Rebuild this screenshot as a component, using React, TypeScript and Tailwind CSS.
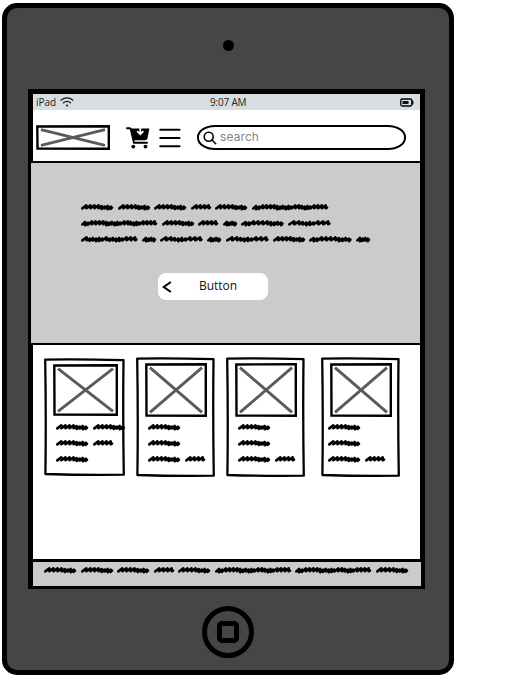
import React from "react";

type Kind = "a" | "b" | "c" | "d" | "e" | "f" | "g";

// o = open stroke, d = dense stroke
const KINDS: Record<Kind, { w: number; pattern: string }> = {
  a: { w: 32, pattern: "oooodddd" },
  b: { w: 20, pattern: "oooo" },
  c: { w: 76, pattern: "ddooooddddddooddddoooo" },
  d: { w: 14, pattern: "dddd" },
  e: { w: 42.4, pattern: "ddoooodddd" },
  f: { w: 42.4, pattern: "ooddddooo" },
  g: { w: 56.4, pattern: "odddddodddddooo" },
};

function scribble(kind: Kind) {
  const { w, pattern } = KINDS[kind];
  const total = [...pattern].reduce((s, c) => s + (c === "o" ? 4.2 : 3.1), 0);
  const k = (w - 3.6) / total;
  let x = 1.3;
  let d = "M1.3 7.4";
  [...pattern].forEach((c, i) => {
    const step = (c === "o" ? 4.2 : 3.1) * k;
    const top = c === "o" ? 4.4 : 5 + (i % 2) * 0.6;
    const bottom = c === "o" ? 7.3 : 8.3 - (i % 3) * 0.4;
    d += ` L${(x + step).toFixed(1)} ${top} L${(x + step).toFixed(1)} ${bottom}`;
    x += step;
  });
  return d + ` L${(w - 1).toFixed(1)} 6.6`;
}

function Words({ kinds, className = "" }: { kinds: string; className?: string }) {
  return (
    <div className={`flex h-4 shrink-0 items-center gap-[4.5px] ${className}`}>
      {[...kinds].map((c, i) => {
        const kind = c as Kind;
        const w = KINDS[kind].w;
        return (
          <svg key={i} width={w} height="12" viewBox={`0 0 ${w} 12`} className="shrink-0 overflow-visible">
            <path d={scribble(kind)} fill="none" stroke="black" strokeWidth="2.6" strokeLinecap="round" strokeLinejoin="round" />
          </svg>
        );
      })}
    </div>
  );
}

function Placeholder({ w, h, className = "" }: { w: number; h: number; className?: string }) {
  return (
    <svg width={w} height={h} viewBox={`0 0 ${w} ${h}`} className={`shrink-0 ${className}`}>
      <path d={`M5 4.7L${w - 5} ${h - 4.7}M${w - 5} 4.7L5 ${h - 4.7}`} stroke="#5a5a5a" strokeWidth="2.9" />
      <path d={`M1.3 1.5L${w - 1.2} 1.2L${w - 1.2} ${h - 1.2}L1.5 ${h - 1.4}Z`} fill="none" stroke="black" strokeWidth="2.4" />
    </svg>
  );
}

const FIRST = ["aa", "ab", "a"];
const OTHER = ["a", "a", "ab"];

const CARDS = [
  { box: "mt-[1px] w-[81px] h-[118px]", pic: "ml-[9px] mt-[6px]", iw: 65, ih: 52, text: "ml-[12px] mt-[3px]", rows: FIRST },
  { box: "ml-[11px] w-[79px] h-[120px]", pic: "ml-[9px] mt-[6px]", iw: 62, ih: 54, text: "ml-[12px] mt-[2px]", rows: OTHER },
  { box: "ml-[11px] w-[79px] h-[120px]", pic: "ml-[9px] mt-[6px]", iw: 62, ih: 54, text: "ml-[12px] mt-[2px]", rows: OTHER },
  { box: "ml-[16px] w-[79px] h-[120px]", pic: "ml-[9px] mt-[6px]", iw: 62, ih: 54, text: "ml-[7px] mt-[2px]", rows: OTHER },
];

// Hand-drawn card outline with uneven edges
function SketchFrame({ w, h }: { w: number; h: number }) {
  return (
    <svg width={w} height={h} viewBox={`0 0 ${w} ${h}`} fill="none" stroke="black" strokeWidth="2.3" strokeLinejoin="round" strokeLinecap="round" className="absolute left-0 top-0">
      <path
        d={`M1.2 1.6Q${w * 0.4} 0.8 ${w - 1.5} 2.2Q${w - 2.2} ${h * 0.5} ${w - 1.2} ${h - 1.3}Q${w * 0.5} ${h - 0.8} 1.4 ${h - 2}Q2.2 ${h * 0.5} 1.2 1.6Z`}
      />
    </svg>
  );
}

function Cart() {
  return (
    <svg width="24" height="24" viewBox="0 0 24 24" className="ml-4 shrink-0">
      <path d="M1 2.2H3.6Q4.5 2.2 4.8 3.2L8 16.8H21" fill="none" stroke="black" strokeWidth="1.9" strokeLinecap="round" />
      <path d="M4.5 2.4H23.4L21.5 12.2Q21 14.3 19 14.3H7.4Z" />
      <path d="M14.3 1.5V7.5M11.2 5.2L14.3 8.3L17.4 5.2" stroke="white" strokeWidth="1.8" fill="none" />
      <circle cx="7.3" cy="20.6" r="1.9" />
      <circle cx="19.5" cy="20.6" r="1.9" />
    </svg>
  );
}

export default function App() {
  return (
    <div className="h-[677px] w-[512px] overflow-hidden bg-white pl-[2px] pt-[3px] font-['Lato',sans-serif]">
      <div className="flex h-[672px] w-[452px] flex-col items-center rounded-[15px] border-[5px] border-black bg-[#464646]">
        <div className="mt-[32px] size-[11px] shrink-0 rounded-full bg-black" />

        <main className="ml-[21px] mt-[38px] flex h-[500px] w-[397px] shrink-0 flex-col self-start border-x-[5px] border-b-[3px] border-t-[5px] border-black bg-white">
          <div className="flex h-4 shrink-0 items-center bg-[#d6dee1] px-[3px] text-[#222]">
            <span className="w-[24px] font-['Open_Sans',sans-serif] text-[10px] leading-[14px]">iPad</span>
            <svg width="14" height="10" viewBox="0 0 14 10" fill="none" stroke="#111" strokeWidth="1.2" strokeLinecap="round">
              <path d="M1 3.2Q7-1.5 13 3.2M3.5 5.8Q7 3 10.5 5.8" />
              <circle cx="7" cy="8.5" r="1" fill="#111" stroke="none" />
            </svg>
            <span className="ml-[136px] w-[38px] whitespace-nowrap font-['Open_Sans',sans-serif] text-[10px] leading-[14px] tracking-[-0.2px]">9:07 AM</span>
            <svg width="14" height="9" viewBox="0 0 14 9" className="ml-auto mr-[3px]">
              <rect x="0.8" y="1" width="11" height="7" rx="1.4" fill="#d6dee1" stroke="black" strokeWidth="1.3" />
              <path d="M12.3 2.5Q13.5 4.5 12.3 6.5" fill="none" stroke="black" strokeWidth="1.3" />
              <rect x="2.5" y="3" width="6" height="3" fill="#111" />
            </svg>
          </div>

          <header className="flex h-[51px] shrink-0 items-center pl-[3px] pt-[4px]">
            <Placeholder w={74} h={25} />
            <Cart />
            <svg width="22" height="20" viewBox="0 0 22 20" stroke="black" strokeWidth="2.1" strokeLinecap="round" className="ml-[9px] shrink-0">
              <path d="M1.3 1.8H20.5M1.3 10H20.5M1.3 18.2H20.5" />
            </svg>
            <div className="ml-[16px] flex h-[25px] w-[209px] items-center rounded-[18px/12px] border-2 border-black pl-[4px]">
              <svg width="14" height="14" viewBox="0 0 14 14" fill="none" stroke="black" strokeWidth="1.6" strokeLinecap="round">
                <circle cx="5.7" cy="5.7" r="4.5" />
                <path d="M9 9L12.7 12.7" />
              </svg>
              <span className="ml-[3px] pb-[2px] font-['Inter',sans-serif] text-[12px] leading-4 tracking-[0.1px] text-[#85818d]">search</span>
            </div>
          </header>

          <section className="-ml-[2px] flex h-[184px] w-[389px] shrink-0 flex-col border-y-2 border-black bg-[#cbcbcb] pt-[36px]">
            <div className="ml-[50px]">
              <Words kinds="aaabac" />
              <Words kinds="cabdef" />
              <Words kinds="gdfdfaed" />
            </div>
            <button className="relative ml-[127px] mt-[26px] flex h-[27px] w-[110px] items-center justify-center rounded-[8px] bg-white pb-px pl-[10px] font-['Open_Sans',sans-serif] text-[12px] leading-4 text-[#111]">
              <svg width="10" height="12" viewBox="0 0 10 12" fill="none" stroke="black" strokeWidth="2.1" className="absolute left-[4px] top-[8px]">
                <path d="M8.8 1L1.8 6L8.8 11" />
              </svg>
              Button
            </button>
          </section>

          <section className="flex h-[214px] shrink-0 items-start pl-[11px] pt-[12px]">
            {CARDS.map((c, i) => (
              <article key={i} className={`relative shrink-0 overflow-hidden ${c.box}`}>
                <SketchFrame w={i === 0 ? 81 : 79} h={i === 0 ? 118 : 120} />
                <Placeholder w={c.iw} h={c.ih} className={c.pic} />
                <div className={c.text}>
                  {c.rows.map((r, j) => (
                    <Words key={j} kinds={r} />
                  ))}
                </div>
              </article>
            ))}
          </section>

          <footer className="min-h-0 w-[388px] flex-1 border-t-[3px] border-black bg-[#cbcbcb] pl-[11px]">
            <Words kinds="aaabacca" />
          </footer>
        </main>

        <div className="mt-[17px] flex size-[52px] shrink-0 items-center justify-center rounded-full border-[5px] border-black">
          <div className="size-[22px] rounded-[5px] border-[5px] border-black" />
        </div>
      </div>
    </div>
  );
}
